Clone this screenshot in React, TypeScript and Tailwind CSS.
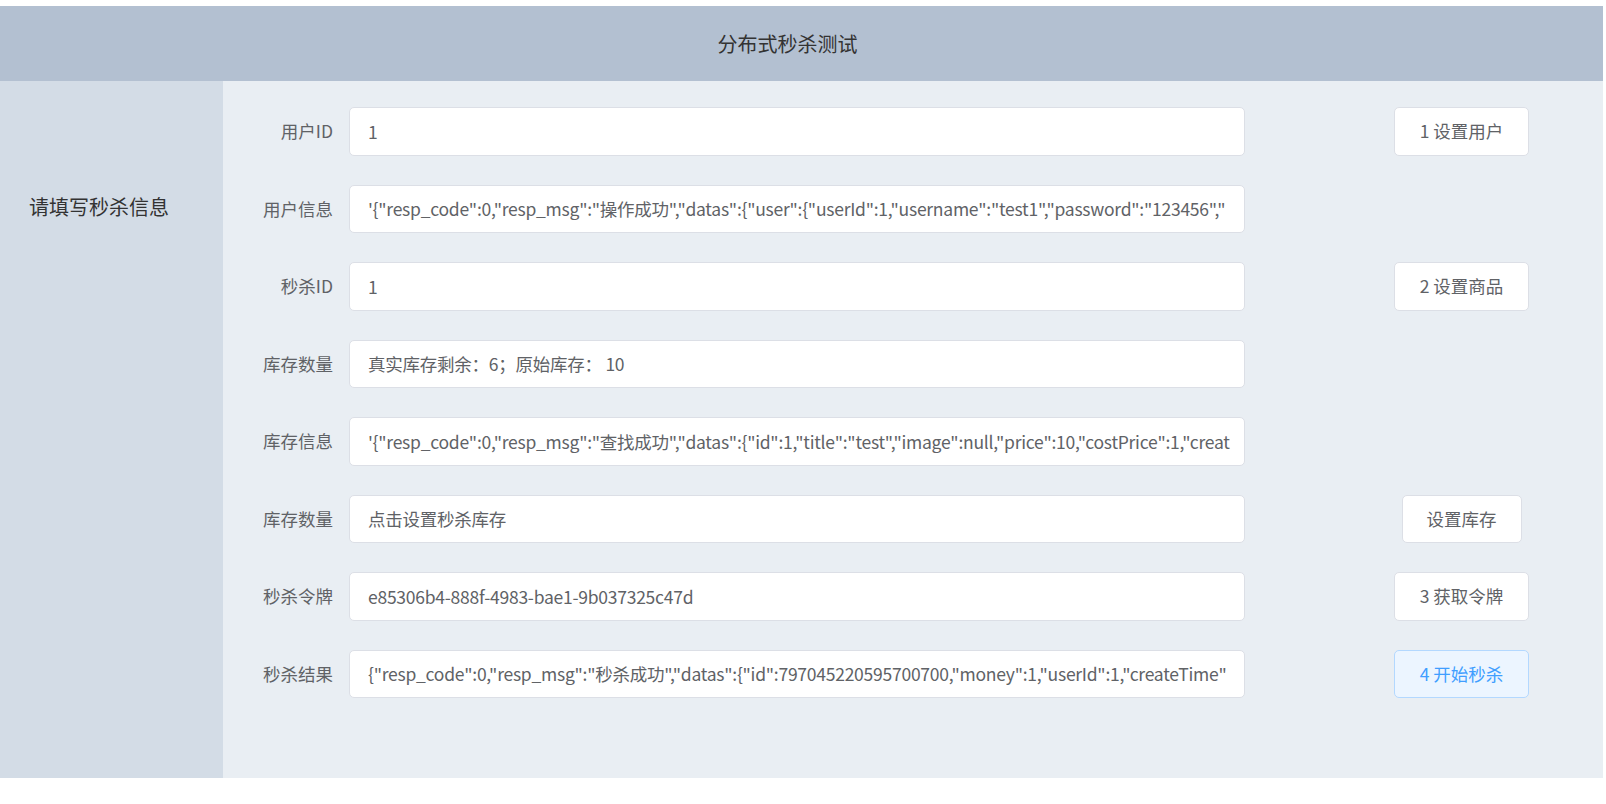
import React from 'react'

type Row = {
  label: string
  value: string
  button?: { text: string; width: string; primary?: boolean }
}

const rows: Row[] = [
  { label: '用户ID', value: '1', button: { text: '1 设置用户', width: 'w-[135px]' } },
  {
    label: '用户信息',
    value: '\'{"resp_code":0,"resp_msg":"操作成功","datas":{"user":{"userId":1,"username":"test1","password":"123456","',
  },
  { label: '秒杀ID', value: '1', button: { text: '2 设置商品', width: 'w-[135px]' } },
  { label: '库存数量', value: '真实库存剩余：6；原始库存： 10' },
  {
    label: '库存信息',
    value: '\'{"resp_code":0,"resp_msg":"查找成功","datas":{"id":1,"title":"test","image":null,"price":10,"costPrice":1,"creat',
  },
  { label: '库存数量', value: '点击设置秒杀库存', button: { text: '设置库存', width: 'w-[120px]' } },
  {
    label: '秒杀令牌',
    value: 'e85306b4-888f-4983-bae1-9b037325c47d',
    button: { text: '3 获取令牌', width: 'w-[135px]' },
  },
  {
    label: '秒杀结果',
    value: '{"resp_code":0,"resp_msg":"秒杀成功","datas":{"id":797045220595700700,"money":1,"userId":1,"createTime"',
    button: { text: '4 开始秒杀', width: 'w-[135px]', primary: true },
  },
]

const FormRow = ({ row }: { row: Row }): JSX.Element => (
  <div className="flex flex-row items-center h-[48.5px]">
    <label className="w-[110px] text-right text-[17.5px] text-[#606266]">{row.label}</label>
    <input
      readOnly
      value={row.value}
      className="ml-[16px] w-[896px] h-full pl-[18px] pr-[12px] text-[17.5px] tracking-[-0.25px] text-[#606266] bg-white border border-[#dcdfe6] rounded-[5px] outline-none"
    />
    <div className="ml-[75px] w-[283px] flex justify-center">
      {row.button && (
        <button
          className={
            row.button.primary
              ? `${row.button.width} h-[48.5px] text-[17.5px] rounded-[5px] border border-[#b3d8ff] bg-[#ecf5ff] text-[#409eff]`
              : `${row.button.width} h-[48.5px] text-[17.5px] rounded-[5px] border border-[#dcdfe6] bg-white text-[#606266]`
          }
        >
          {row.button.text}
        </button>
      )}
    </div>
  </div>
)

export default function App(): JSX.Element {
  return (
    <div className="w-[1603px] pt-[6px] font-[family-name:'Noto_Sans_CJK_SC',sans-serif]">
      <header className="h-[75px] flex items-center justify-center pr-[28px] bg-[#b3c0d1] text-[20px] text-[#333]">
        分布式秒杀测试
      </header>
      <div className="flex flex-row h-[697px]">
        <aside className="w-[223px] bg-[#d3dce6] pt-[111px] pl-[29px] text-[20px] text-[#333]">请填写秒杀信息</aside>
        <main className="flex-1 bg-[#e9eef3] pt-[26px] flex flex-col gap-[29px]">
          {rows.map((row, i) => (
            <FormRow key={i} row={row} />
          ))}
        </main>
      </div>
    </div>
  )
}
